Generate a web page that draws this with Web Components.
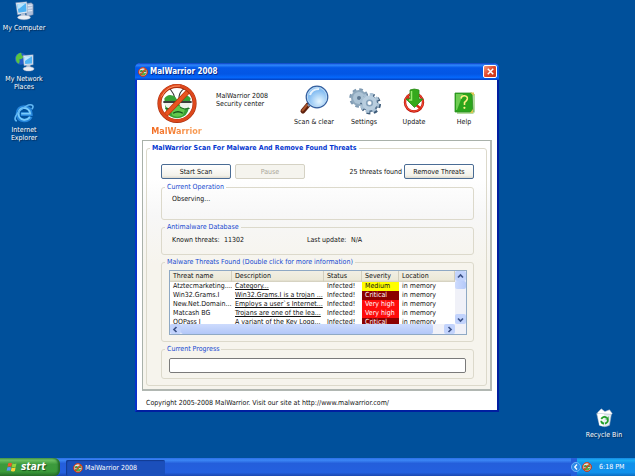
<!DOCTYPE html>
<html lang="en">
<head>
<meta charset="utf-8">
<title>MalWarrior 2008</title>
<style>
html, body { margin: 0; height: 100%; }
body { font: 7px/8px "DejaVu Sans Condensed", "DejaVu Sans", sans-serif; color: #111; overflow: hidden; }
</style>
</head>
<body>
<xp-desktop></xp-desktop>
<script>
const define = (name, html, setup) => {
  const t = document.createElement('template');
  t.innerHTML = html;
  customElements.define(name, class extends HTMLElement {
    connectedCallback() {
      if (this.shadowRoot) return;
      const root = this.attachShadow({ mode: 'open' });
      root.append(t.content.cloneNode(true));
      if (setup) setup(this, root);
    }
  });
};

const art = {
  logo: `<svg viewBox="0 0 42 42"><circle cx="21" cy="21" r="17" fill="#fff"/>
    <path d="M19 16C18 10 15 8 13 5M23 16C23 10 25 8 28 6" fill="none" stroke="#333" stroke-width="1.100"/>
    <path d="M8 16Q12 10 19 14L21 17L24 14Q31 10 35 16L33 24Q33 31 28 34Q21 38 14 34Q10 31 9 25Z" fill="#37a236"/>
    <path d="M14 25Q21 22 30 25L27 33Q21 36 16 33Z" fill="#62c84d"/>
    <path d="M8 20H20Q19 26 14 26Q9 26 8 20ZM23 20H35Q34 26 29 26Q24 26 23 20Z" fill="#eef0ea"/>
    <path d="M7 19.500H20M23 19.500H36" stroke="#3b3f3b" stroke-width="2"/><path d="M9 26Q14 28 19 25M24 25Q29 28 34 26" fill="none" stroke="#1d6023" stroke-width="1"/>
    <path d="M17 31Q22 28 27 31" fill="none" stroke="#14531a" stroke-width="1.400"/>
    <path d="M33 8L9 33" stroke="#b83406" stroke-width="5"/><path d="M33 8L9 33" stroke="#e95420" stroke-width="3.800"/>
    <circle cx="21" cy="21" r="18" fill="none" stroke="#a83010" stroke-width="4.200"/>
    <circle cx="21" cy="20.700" r="18" fill="none" stroke="#dd481c" stroke-width="3"/>
    <path d="M5 14Q11 2 24 3" fill="none" stroke="#ff9468" stroke-width="1"/></svg>`,
  lens: `<svg viewBox="0 0 30 30"><defs><radialGradient id="g" cx=".6" cy=".7"><stop offset="0" stop-color="#e6f6ff"/><stop offset="1" stop-color="#85bdf2"/></radialGradient></defs>
    <path d="M9 20L4 26" stroke="#5d1f0c" stroke-width="5" stroke-linecap="round"/><path d="M8 20L3.500 25.500" stroke="#a9542c" stroke-width="2" stroke-linecap="round"/><path d="M11 19L9 21" stroke="#8a98a8" stroke-width="2.500"/>
    <circle cx="18" cy="12" r="10.800" fill="url(#g)" stroke="#365f9e" stroke-width="1.200"/><circle cx="18" cy="12" r="9.600" fill="none" stroke="#b9d9f4" stroke-width="1"/>
    <path d="M11 10Q13 4 20 4" stroke="#fff" stroke-width="2" fill="none" opacity=".8"/></svg>`,
  gears: `<svg viewBox="0 0 30 30"><g transform="translate(10 13)"><circle r="8" fill="none" stroke="#7f9ab2" stroke-width="3.500" stroke-dasharray="3.400 2.880"/><circle r="8" fill="#8ea8bd"/><circle r="6" fill="#acc3d5"/><circle r="2" fill="#5c7690"/></g>
    <g transform="translate(20.500 18)"><circle cx="1" cy="1" r="8.500" fill="none" stroke="#3e5c7a" stroke-width="4" stroke-dasharray="3.600 3.080"/><circle cx="1" cy="1" r="8" fill="#55728f"/><circle r="8" fill="none" stroke="#a9c1d5" stroke-width="4" stroke-dasharray="3.400 2.880"/><circle r="7.500" fill="#b9cedf"/><circle r="3.600" fill="#86a2bb"/><circle r="2" fill="#fff"/></g></svg>`,
  update: `<svg viewBox="0 0 30 30"><circle cx="15" cy="17.500" r="9" fill="#fff" stroke="#b91009" stroke-width="2.400"/><circle cx="15" cy="17.300" r="9" fill="none" stroke="#f04a32" stroke-width="1.200"/>
    <path d="M8 12L22 24" stroke="#dc2a17" stroke-width="2.500"/><path d="M11 5Q15 3 20 5V14H24L15.500 22.500L7 14H11Z" fill="#35a91c" stroke="#2c8a1c" stroke-width=".8"/><path d="M12.500 6V15H10" stroke="#9aed70" stroke-width="1.500" fill="none"/></svg>`,
  help: `<svg viewBox="0 0 30 30"><path d="M8 8L26 9V27L24 29H8Z" fill="#b5dca0"/><path d="M6 8H23L24 27H6Z" fill="#2aa51b" stroke="#2f8f25" stroke-width=".8"/><path d="M7 9H14L8 25H7Z" fill="#6fcd52"/>
    <path d="M12 13.500Q12.500 10.500 15.500 10.700Q18.800 11 18.300 14Q17.800 16 15.500 17.500V20" fill="none" stroke="#ffef85" stroke-width="1.600"/><circle cx="15.400" cy="22.800" r="1.100" fill="#ffef85"/>
    <path d="M21 7.500H25V11ZM24 24V28H21Z" fill="#e1c552"/></svg>`,
  computer: `<svg viewBox="0 0 24 24"><path d="M13 4L20 3L22 5V16L15 18Z" fill="#aebfda" stroke="#6a7c9c" stroke-width=".5"/><path d="M16 6L21 5.500M16 9L21 8.500M16 12L21 11.500" stroke="#eef4fc"/>
    <path d="M3 3L15 2L16 14L5 16Z" fill="#e1e8f2" stroke="#8a9cba" stroke-width=".5"/><path d="M4.500 4.500L14 3.500L14.800 12.500L6 14Z" fill="#4fb2f3"/><path d="M4.500 4.500L14 3.500L6 10Z" fill="#b9e5ff"/>
    <path d="M9 15L13 14.500L14 18H8Z" fill="#b9c5d8"/><ellipse cx="12" cy="19" rx="7" ry="2.500" fill="#eceff5" stroke="#9aa8bf" stroke-width=".5"/></svg>`,
  network: `<svg viewBox="0 0 24 24"><circle cx="8.500" cy="8.500" r="6.500" fill="#245ec8"/><path d="M3 7Q5 2 9 2Q9 6 12 6Q10 9 7 9Q8 12 6 14Q3 12 3 7Z" fill="#59c441"/>
    <path d="M11 5L22 4L22 15L12 16Z" fill="#dde6f2" stroke="#7c90b2" stroke-width=".5"/><path d="M12.500 6.500L20.700 5.600V13.500L13.300 14.300Z" fill="#52b5f4"/><path d="M12.500 6.500L20.700 5.600L13 11Z" fill="#c2e9ff"/>
    <path d="M15 15H19V19H14Z" fill="#b9c5d8"/><ellipse cx="17" cy="19.500" rx="6" ry="2.400" fill="#eceff5" stroke="#9aa8bf" stroke-width=".5"/></svg>`,
  ie: `<svg viewBox="0 0 24 24"><path d="M19.500 16Q17 20.500 12 20.200Q5 19.500 5 12.500Q5.500 6 12 5.500Q19.500 6 19.500 13.200H8.500" fill="none" stroke="#2585da" stroke-width="4"/>
    <path d="M18.500 16.500Q16 19.700 12 19.400Q6 18.500 6 12.500Q6.500 7 12 6.500Q18 7 18.800 12.700H9" fill="none" stroke="#7accfb" stroke-width="2"/>
    <path d="M4 21Q-1 18 8 9Q18 .500 21.500 4Q22.500 5.500 20.500 8" fill="none" stroke="#62b8f4" stroke-width="1.700"/></svg>`,
  bin: `<svg viewBox="0 0 24 24"><path d="M5 6L9 2L13 5L18 3L21 7L18 10H6Z" fill="#fff" stroke="#9fb0c6" stroke-width=".6"/><path d="M4 7L20 8L18 20Q13 23 7 20Z" fill="#e6eef3" stroke="#a2b3c4" stroke-width=".6"/>
    <path d="M5 7L12 8L11 21L7 20Z" fill="#fff"/><path d="M9 13Q12 9 15 12M16 13Q17 17 13 18M12 18Q9 18 9 15" fill="none" stroke="#23a02a" stroke-width="2"/><path d="M13.500 13.500H17V10Z" fill="#23a02a"/></svg>`,
  flag: `<svg viewBox="0 0 16 16"><path d="M3 3Q5.500 1.500 8 3L7 7.500Q4.500 6.500 2 7.500Z" fill="#f0562a"/><path d="M8.700 3.300Q11 4.500 14 3.300L13 7.700Q10.500 9 7.700 7.800Z" fill="#8fd53d"/><path d="M1.800 8.500Q4.500 7.500 6.800 8.500L5.800 13Q3.500 12 .8 13Z" fill="#5697f5"/><path d="M7.500 8.800Q10 10 12.800 8.800L11.800 13.200Q9 14.500 6.500 13.300Z" fill="#fbd137"/></svg>`,
  up: `<svg viewBox="0 0 9 9"><path d="M2 5.500L4.500 3L7 5.500" fill="none" stroke="#3c5288" stroke-width="1.700"/></svg>`,
  down: `<svg viewBox="0 0 9 9"><path d="M2 3.500L4.500 6L7 3.500" fill="none" stroke="#3c5288" stroke-width="1.700"/></svg>`,
  left: `<svg viewBox="0 0 9 9"><path d="M5.500 2L3 4.500L5.500 7" fill="none" stroke="#3c5288" stroke-width="1.700"/></svg>`,
  right: `<svg viewBox="0 0 9 9"><path d="M3.500 2L6 4.500L3.500 7" fill="none" stroke="#3c5288" stroke-width="1.700"/></svg>`,
  back: `<svg viewBox="0 0 12 12"><circle cx="6" cy="6" r="5.500" fill="#2c8ae8" stroke="#8ccaff" stroke-width=".8"/><path d="M7.200 3L4.500 6L7.200 9" fill="none" stroke="#fff" stroke-width="1.500"/></svg>`,
  close: `<svg viewBox="0 0 12 12"><path d="M3 3L9 9M9 3L3 9" stroke="#fff" stroke-width="1.600"/></svg>`
};

define('app-icon', `<style>:host{display:block;flex:none;line-height:0}svg{display:block;width:100%;height:100%;overflow:visible}</style>`,
  (host, root) => root.append(document.createRange().createContextualFragment(art[host.getAttribute('name')])));

define('desktop-icon', `<style>
:host{display:block;width:48px}
button{all:unset;display:flex;flex-direction:column;align-items:center;gap:2px;width:100%;text-align:center;color:#fff;text-shadow:1px 1px 1px #00264d;cursor:default}
app-icon{width:22px;height:22px}
</style><button type="button"><app-icon></app-icon><span><slot></slot></span></button>`,
  (host, root) => {
    const i = document.createElement('app-icon');
    i.setAttribute('name', host.getAttribute('icon'));
    root.querySelector('app-icon').replaceWith(i);
  });

define('tool-button', `<style>
:host{display:block;width:50px}
button{all:unset;display:flex;flex-direction:column;align-items:center;gap:3px;width:100%;text-align:center;white-space:nowrap}
app-icon{width:30px;height:30px}
</style><button type="button"><app-icon></app-icon><span><slot></slot></span></button>`,
  (host, root) => {
    const i = document.createElement('app-icon');
    i.setAttribute('name', host.getAttribute('icon'));
    root.querySelector('app-icon').replaceWith(i);
  });

define('push-button', `<style>
:host{display:block;width:70px}
button{box-sizing:border-box;width:100%;height:15px;margin:0;padding:0;border:1px solid #4a6c94;border-radius:2px;font:inherit;color:#111;background:linear-gradient(#fff,#f3f2ea 80%,#dedace)}
button:disabled{color:#aaa799;border-color:#d5d2c4;background:#f5f4ee}
</style><button type="button"><slot></slot></button>`,
  (host, root) => { root.querySelector('button').disabled = host.hasAttribute('disabled'); });

define('group-box', `<style>
:host{display:block}
fieldset{min-width:0;margin:0;padding:0;border:1px solid #dcd9cb;border-radius:3px}
legend{margin-left:3px;padding:0 2px;color:#1548d0;line-height:8px;white-space:nowrap}
:host([main]) legend{font-weight:bold;color:#0438d0}
</style><fieldset><legend></legend><slot></slot></fieldset>`,
  (host, root) => { root.querySelector('legend').textContent = host.getAttribute('label'); });

define('threat-list', `<style>
:host{display:grid;grid-template-columns:1fr 11px;grid-template-rows:1fr 10px;box-sizing:border-box;height:65px;border:1px solid #8fa9c4;background:#fff}
.view{overflow:hidden}
table{width:100%;table-layout:fixed;border-collapse:collapse}
th,td{height:9px;line-height:9px;padding:0 0 0 3px;text-align:left;font-weight:normal;white-space:nowrap;overflow:hidden}
th{height:11px;background:linear-gradient(#f1efe4,#ece9d8 80%,#d0ccbb);box-shadow:inset -1px 0 #d2cebd}
a{color:inherit}
.Medium{background:#ff0}.Critical{background:#8b0000;color:#fff}.Very{background:#fe0b0b;color:#fff}
.bar{display:flex;background:#f0f1f8}
.v{flex-direction:column;grid-row:span 2;padding-bottom:10px}
button{all:unset;flex:none;background:#c2d3fc;border-radius:2px}
.v button{height:10px}.h button{width:11px}
app-icon{width:9px;height:9px;margin:0 auto}
.thumb{background:linear-gradient(90deg,#cddbfd,#b5c9f9);border-radius:2px}
.v .thumb{height:8px;margin-bottom:auto}
.h .thumb{width:252px;margin-right:auto;background:linear-gradient(#cddbfd,#b2c7f8)}
</style>
<div class="view"><table><colgroup><col style="width:62px"><col style="width:92px"><col style="width:38px"><col style="width:37px"><col></colgroup>
<thead><tr><th>Threat name</th><th>Description</th><th>Status</th><th>Severity</th><th>Location</th></tr></thead><tbody></tbody></table></div>
<div class="bar v"><button type="button" aria-label="Scroll up"><app-icon name="up"></app-icon></button><div class="thumb"></div><button type="button" aria-label="Scroll down"><app-icon name="down"></app-icon></button></div>
<div class="bar h"><button type="button" aria-label="Scroll left"><app-icon name="left"></app-icon></button><div class="thumb"></div><button type="button" aria-label="Scroll right"><app-icon name="right"></app-icon></button></div>`,
  (host, root) => {
    const rows = [
      ['Atztecmarketing....', 'Category...', 'Medium'],
      ['Win32.Grams.I', 'Win32.Grams.I is a trojan ...', 'Critical'],
      ['New.Net.Domain...', 'Employs a user`s Internet...', 'Very high'],
      ['Matcash BG', 'Trojans are one of the lea...', 'Very high'],
      ['QQPass I', 'A variant of the Key Logg...', 'Critical']
    ];
    root.querySelector('tbody').innerHTML = rows.map(([n, d, s]) =>
      `<tr><td>${n}</td><td><a href="#">${d}</a></td><td>Infected!</td><td class="${s}">${s}</td><td>in memory</td></tr>`).join('');
  });

define('app-window', `<style>
:host{display:block;box-sizing:border-box;width:364px;border:2px solid #0831c9;border-top:0;border-right-color:#001ea0;border-bottom-color:#001ea0;border-radius:5px 5px 0 0;background:#fff}
.title{display:flex;align-items:center;gap:2px;height:17px;margin:0 -2px;padding:0 2px 0 3px;border-radius:5px 5px 0 0;background:linear-gradient(#0a3cc0,#2f88fb 12%,#0459e8 28%,#0356e4 65%,#0567fb 85%,#0340c0);color:#fff}
h1{flex:1;margin:0;font-size:8px;line-height:10px;text-shadow:1px 1px #062a8a}
.title app-icon{width:10px;height:10px}
.close{all:unset;box-sizing:border-box;width:14px;height:13px;border:1px solid #fff;border-radius:2px;background:linear-gradient(135deg,#f09a7c,#e0472b 50%,#c93212)}
.close app-icon{width:11px;height:11px;margin:0 auto}
header{display:flex;height:60px}
.brand{display:flex;flex-direction:column;align-items:center;width:79px;padding-top:3px}
.brand app-icon{width:42px;height:41px}
.brand strong{font-size:9px;line-height:14px;background:linear-gradient(90deg,#f26a20,#f9a159);background-clip:text;-webkit-background-clip:text;color:transparent}
header p{flex:1;margin:12px 0 0}
nav{display:flex;padding:5px 8px 0 0}
main{margin:0 5px;padding:3px;border:1px solid #a9b1aa;border-right:2px solid #b5b9b5;border-bottom:2px solid #b1b7b2;background:linear-gradient(#fff 15%,#f7f7f7 30%,#f6f4ed 50%)}
.stack{display:grid;gap:3px;padding:12px 12px 6px 14px}
.actions{display:flex;align-items:center;gap:4px;margin-bottom:1px}
.actions span{margin-left:auto;margin-right:-2px}
.op{height:24px;padding:4px 0 0 10px}
.db{display:flex;height:18px;padding:5px 0 0 10px}
.db span{flex:none;width:52px}
.db span:nth-child(2){width:83px}
.db span:nth-child(3){width:44px}
threat-list{margin:4px 6px 6px 7px}
progress{appearance:none;-webkit-appearance:none;display:block;box-sizing:border-box;width:auto;height:15px;border:1px solid #7a7a7a;border-radius:2px;background:#fff}
.progress{display:grid;padding:5px 7px}
progress::-webkit-progress-bar{background:#fff;border-radius:2px}
footer{padding:8px 9px 3px}
footer a{color:inherit;text-decoration:none}
</style>
<div class="title"><app-icon name="logo"></app-icon><h1>MalWarrior 2008</h1><button class="close" type="button" aria-label="Close"><app-icon name="close"></app-icon></button></div>
<header><div class="brand"><app-icon name="logo"></app-icon><strong>MalWarrior</strong></div>
<p>MalWarrior 2008<br>Security center</p>
<nav><tool-button icon="lens">Scan &amp; clear</tool-button><tool-button icon="gears">Settings</tool-button><tool-button icon="update">Update</tool-button><tool-button icon="help">Help</tool-button></nav></header>
<main><group-box main label="MalWarrior Scan For Malware And Remove Found Threats"><div class="stack">
<div class="actions"><push-button>Start Scan</push-button><push-button disabled>Pause</push-button><span>25 threats found</span><push-button>Remove Threats</push-button></div>
<group-box label="Current Operation"><div class="op">Observing...</div></group-box>
<group-box label="Antimalware Database"><div class="db"><span>Known threats:</span><span>11302</span><span>Last update:</span><span>N/A</span></div></group-box>
<group-box label="Malware Threats Found (Double click for more information)"><threat-list></threat-list></group-box>
<group-box label="Current Progress"><div class="progress"><progress value="0" max="100" aria-label="Current Progress"></progress></div></group-box>
</div></group-box></main>
<footer>Copyright 2005-2008 MalWarrior. Visit our site at <a href="http://www.malwarrior.com/">http://www.malwarrior.com/</a></footer>`);

define('task-bar', `<style>
:host{display:flex;height:18px;background:linear-gradient(#2a6fe8,#3c87f5 12%,#245edb 30%,#2460df 80%,#1a47b0);color:#fff}
button{all:unset;box-sizing:border-box;display:flex;align-items:center}
.start{width:60px;padding-left:6px;gap:3px;border-radius:0 6px 6px 0;background:linear-gradient(#55a855,#6cc062 12%,#3c9a3c 35%,#3a9a3a 75%,#276f27);box-shadow:inset -2px 0 2px #246a2b;font:italic bold 10px/14px "DejaVu Sans Condensed","DejaVu Sans",sans-serif;text-shadow:1px 1px 1px #174d17}
.start app-icon{width:12px;height:12px}
.task{width:99px;height:16px;margin:2px 0 0 6px;padding-left:7px;gap:2px;border-radius:2px;background:#1b4fbb;box-shadow:inset 1px 1px 1px #123a91}
.task app-icon,.tray app-icon{width:10px;height:10px}
.tray{display:flex;align-items:center;gap:1px;margin-left:auto;width:64px;background:linear-gradient(90deg,#245edb 6px,transparent 6px),linear-gradient(#1686e2,#1ab0f6 12%,#1190ea 30%,#1191ec 80%,#0c6cc0)}
.tray time{margin-left:6px}
</style>
<button class="start" type="button"><app-icon name="flag"></app-icon>start</button>
<button class="task" type="button"><app-icon name="logo"></app-icon>MalWarrior 2008</button>
<div class="tray"><button type="button" aria-label="Show hidden icons"><app-icon name="back"></app-icon></button><app-icon name="logo"></app-icon><time>6:18 PM</time></div>`);

define('xp-desktop', `<style>
:host{display:flex;flex-direction:column;height:100vh;background:#00509b}
.area{flex:1;position:relative}
desktop-icon,app-window{position:absolute}
app-window{left:135px;top:63px}
.pc{left:0;top:0}.net{left:0;top:51px}.ie{left:0;top:102px}.bin{right:7px;bottom:19px}
</style>
<div class="area"><desktop-icon class="pc" icon="computer">My Computer</desktop-icon><desktop-icon class="net" icon="network">My Network Places</desktop-icon><desktop-icon class="ie" icon="ie">Internet Explorer</desktop-icon><desktop-icon class="bin" icon="bin">Recycle Bin</desktop-icon><app-window></app-window></div><task-bar></task-bar>`);
</script>
</body>
</html>
